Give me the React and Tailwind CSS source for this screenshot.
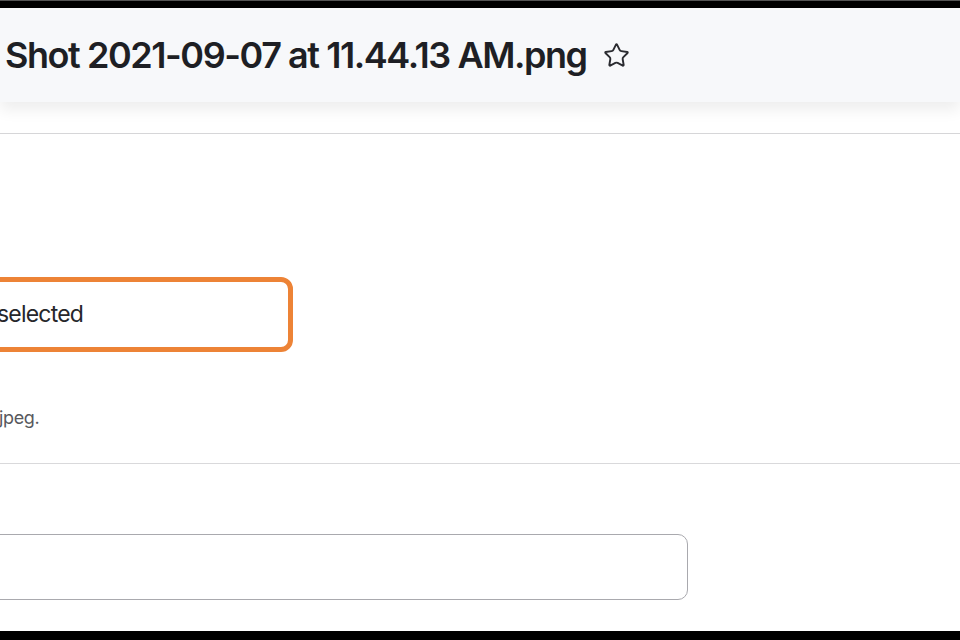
import React from "react";
import { Star } from "lucide-react";

const App = () => {
    return (
        <div className="w-[960px] h-[640px] overflow-hidden bg-white flex flex-col font-['Inter','Liberation_Sans',sans-serif]">
            <div className="h-[8px] shrink-0 bg-black border-t border-[#555]" />

            <header className="relative z-10 h-[94px] shrink-0 bg-[#f7f8fa] flex items-center shadow-[0_8px_14px_rgba(0,0,0,0.07)]">
                <h1 className="pl-[5px] text-[36px] leading-none font-semibold tracking-[-0.04em] text-[#1e1f24] whitespace-nowrap">
                    Shot 2021-09-07 at 11.44.13 AM.png
                </h1>
                <Star className="ml-[16px] w-[27px] h-[27px] text-[#2a2b30]" strokeWidth={1.7} />
            </header>

            <div className="h-[32px] shrink-0 border-b border-[#d6d6d8]" />

            <section className="h-[330px] shrink-0 border-b-[1.5px] border-[#d9d9db] pt-[143px]">
                <div className="-ml-[40px] w-[333px] h-[75px] border-[5px] border-[#ed8336] rounded-[12px] flex items-center pl-[32px]">
                    <span className="text-[23px] leading-none tracking-[-0.035em] text-[#26272b]">
                        selected
                    </span>
                </div>
                <p className="mt-[56px] -ml-[1px] text-[18px] leading-[20px] tracking-[-0.02em] text-[#58595d]">
                    jpeg.
                </p>
            </section>

            <div className="flex-1 pt-[70px]">
                <div className="-ml-[20px] w-[708px] h-[66px] border-[1.5px] border-[#a9a9ae] rounded-[10px] bg-white" />
            </div>

            <div className="h-[9px] shrink-0 bg-black" />
        </div>
    );
};

export default App;
